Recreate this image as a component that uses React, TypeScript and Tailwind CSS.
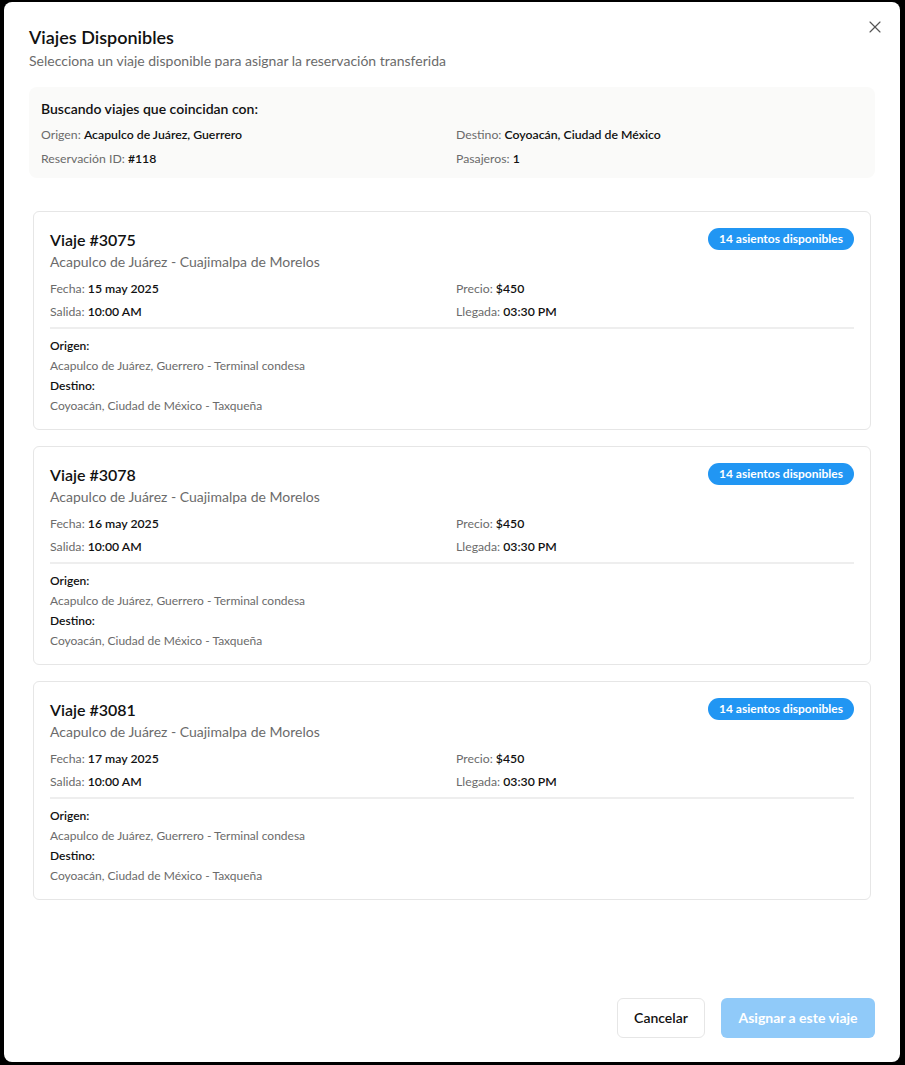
import React from "react";
import { X } from "lucide-react";

const trips = [
  { id: 3075, date: "15 may 2025" },
  { id: 3078, date: "16 may 2025" },
  { id: 3081, date: "17 may 2025" },
];

function Field({ label, value }: { label: string; value: string }) {
  return (
    <div className="text-[12.25px] leading-4 text-[#6b6b6b]">
      {label}: <span className="font-semibold text-[#111]">{value}</span>
    </div>
  );
}

function TripCard({ id, date }: { id: number; date: string }) {
  return (
    <div className="rounded-md border border-[#e6e6e6] bg-white px-4 pt-4 pb-[13px]">
      <div className="flex items-start justify-between">
        <div>
          <div className="text-base leading-6 font-semibold text-[#111]">Viaje #{id}</div>
          <div className="text-sm leading-5 text-[#6b6b6b]">
            Acapulco de Juárez - Cuajimalpa de Morelos
          </div>
        </div>
        <div className="rounded-full bg-[#2196f3] px-[11px] h-[22px] flex items-center text-[12px] font-bold text-white">
          14 asientos disponibles
        </div>
      </div>
      <div className="mt-[9px] grid grid-cols-2 gap-x-2 gap-y-[7px]">
        <Field label="Fecha" value={date} />
        <Field label="Precio" value="$450" />
        <Field label="Salida" value="10:00 AM" />
        <Field label="Llegada" value="03:30 PM" />
      </div>
      <div className="mt-[7px] h-[2px] bg-[#eeeeee]" />
      <div className="mt-[7px] text-[12px] leading-5">
        <div className="font-semibold text-[#111]">Origen:</div>
        <div className="text-[#6b6b6b]">Acapulco de Juárez, Guerrero - Terminal condesa</div>
        <div className="font-semibold text-[#111]">Destino:</div>
        <div className="text-[#6b6b6b]">Coyoacán, Ciudad de México - Taxqueña</div>
      </div>
    </div>
  );
}

export default function App() {
  return (
    <div
      className="min-h-[1065px] w-[905px] bg-black pt-[2px] pl-[4px]"
      style={{ fontFamily: "Lato, 'Noto Sans', sans-serif" }}
    >
      <div className="relative flex h-[1060px] w-[896px] flex-col rounded-lg bg-white px-[25px] pt-[21px] pb-[24px]">
        <button className="absolute right-[15px] top-[15px] text-[#555]">
          <X size={20} strokeWidth={1.4} />
        </button>
        <h2 className="text-lg leading-7 font-semibold text-[#111]">Viajes Disponibles</h2>
        <p className="text-sm leading-5 text-[#6b6b6b]">
          Selecciona un viaje disponible para asignar la reservación transferida
        </p>
        <div className="mt-4 rounded-lg bg-[#fafaf9] px-3 pt-3 pb-[11px]">
          <div className="text-sm leading-5 font-semibold text-[#111]">
            Buscando viajes que coincidan con:
          </div>
          <div className="mt-2 grid grid-cols-2 gap-x-2 gap-y-2">
            <Field label="Origen" value="Acapulco de Juárez, Guerrero" />
            <Field label="Destino" value="Coyoacán, Ciudad de México" />
            <Field label="Reservación ID" value="#118" />
            <Field label="Pasajeros" value="1" />
          </div>
        </div>
        <div className="mt-[33px] flex flex-1 flex-col gap-4 px-1">
          {trips.map((t) => (
            <TripCard key={t.id} id={t.id} date={t.date} />
          ))}
        </div>
        <div className="flex justify-end gap-4">
          <button className="h-[40px] w-[88px] rounded-md border border-[#e6e6e6] bg-white text-sm font-semibold text-[#111]">
            Cancelar
          </button>
          <button className="h-[40px] w-[154px] rounded-md bg-[#90caf9] text-sm font-bold text-white">
            Asignar a este viaje
          </button>
        </div>
      </div>
    </div>
  );
}
